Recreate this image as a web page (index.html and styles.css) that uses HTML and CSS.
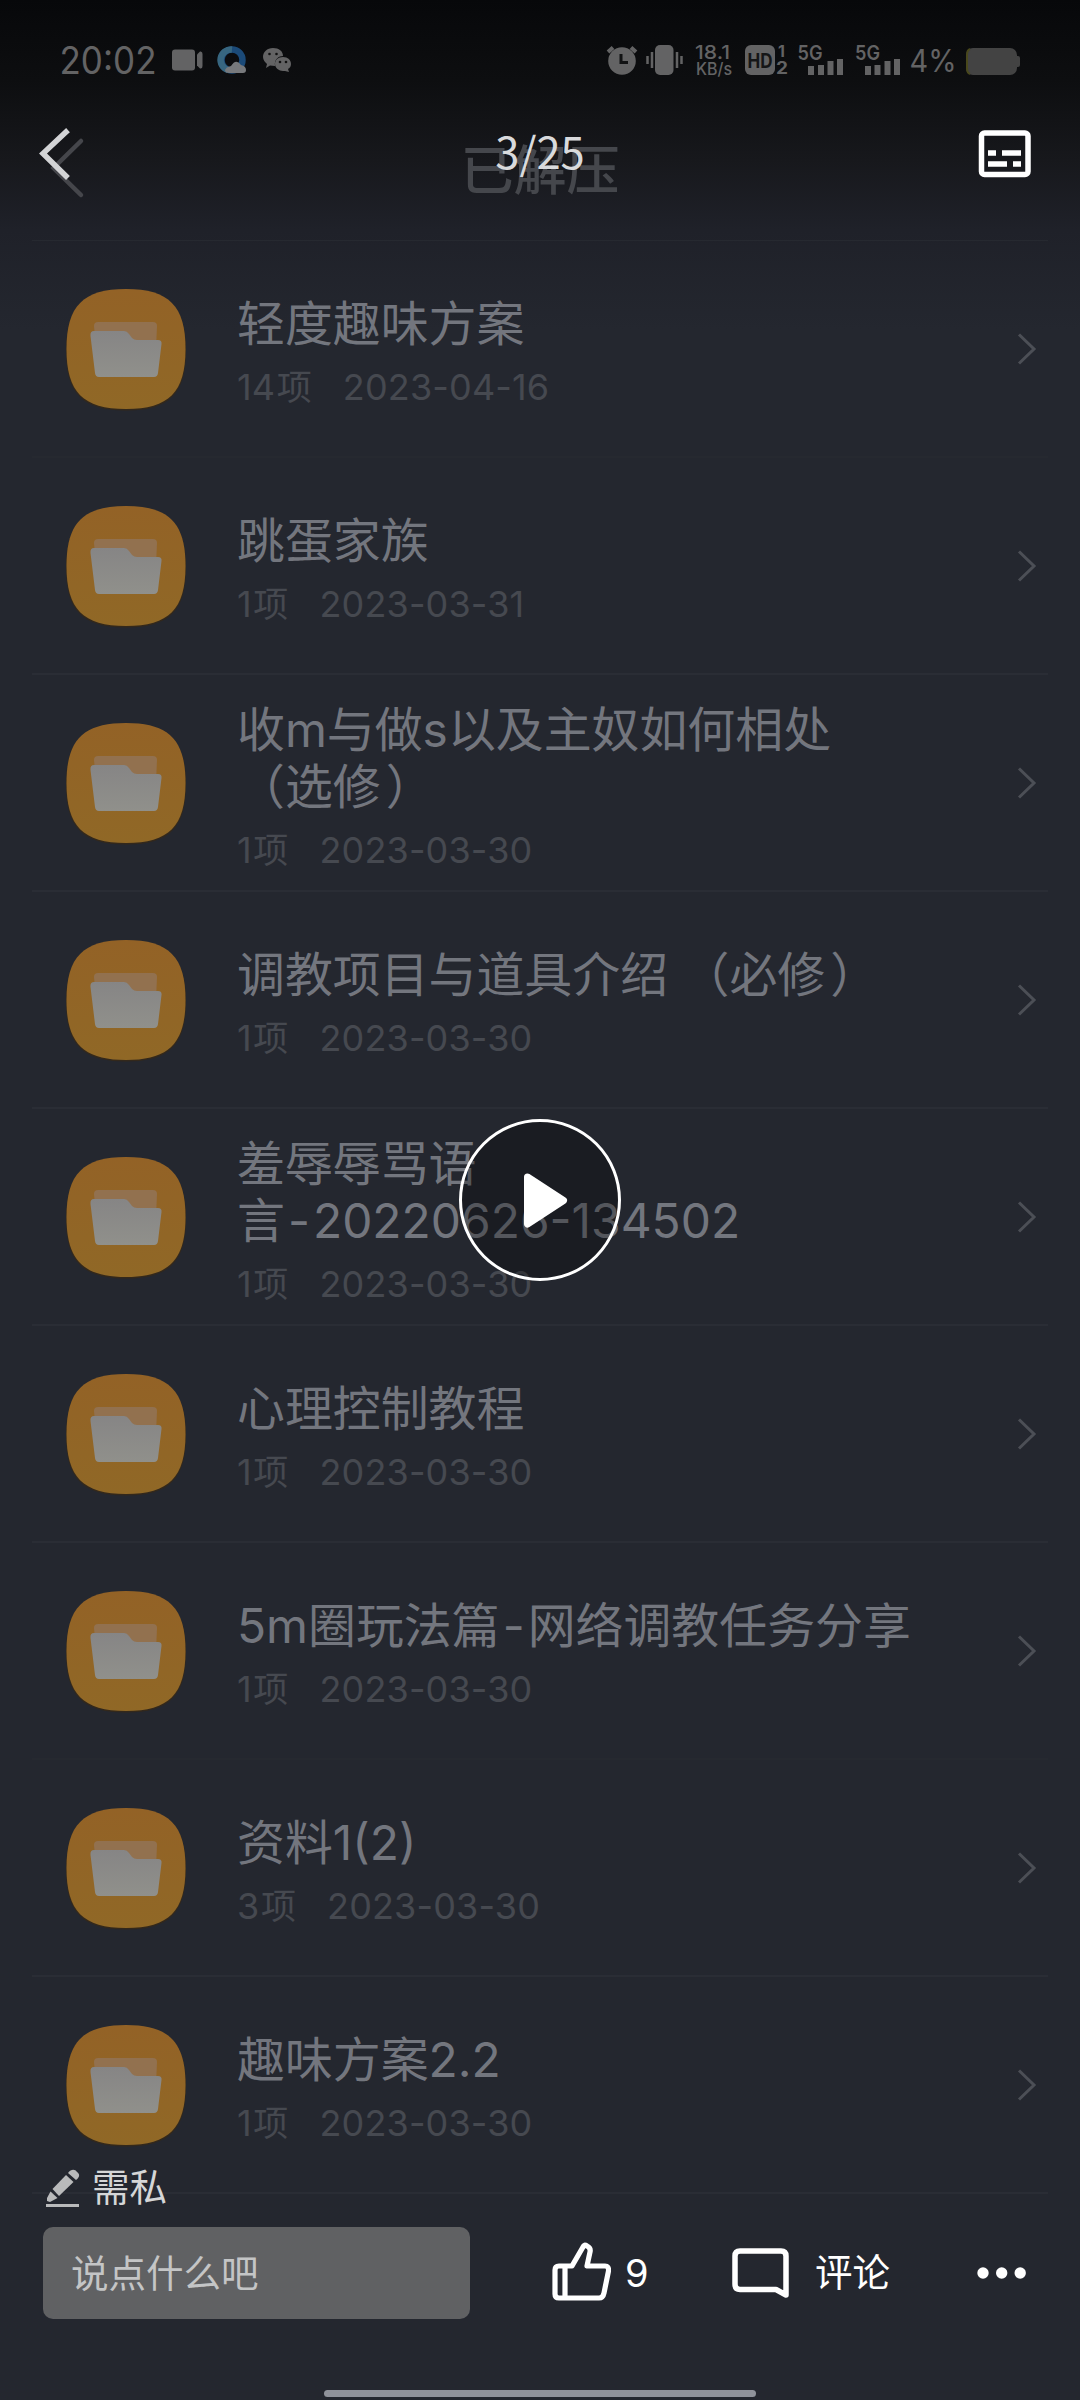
FILE: index.html
```html
<!DOCTYPE html>
<html lang="zh-CN">
<head>
<meta charset="utf-8">
<title>3/25</title>
<link rel="stylesheet" href="styles.css">
</head>
<body>
<svg class="defs" width="0" height="0">
  <defs>
    <linearGradient id="tile" x1="0" y1="0" x2="0" y2="1">
      <stop offset="0" stop-color="#936226"/><stop offset="1" stop-color="#906826"/>
    </linearGradient>
    <linearGradient id="front" x1="0" y1="0" x2="0" y2="1">
      <stop offset="0" stop-color="#868585"/><stop offset="1" stop-color="#90908b"/>
    </linearGradient>
    <symbol id="folder" viewBox="0 0 120 122">
      <path d="M60 1.5C103 1.5 120 18 120 61.500C120 105 103 121.500 60 121.500C17 121.500 0 105 0 61.500C0 18 17 1.500 60 1.500Z" fill="#3a2a13" opacity=".7"/>
      <path d="M60 0C103 0 119.500 17 119.500 60C119.500 103 103 120 60 120C17 120 .5 103 .5 60C.5 17 17 0 60 0Z" fill="url(#tile)"/>
      <path d="M32 33H87Q91 33 91 37L90 60H30L28 37Q28 33 32 33Z" fill="#92714f"/>
      <path d="M28 42H58Q61 42 63 45L66 49Q68 51 71 51H92Q96 51 95.500 55L92 84Q91.500 88 88 88H33Q29.500 88 29 84L24.500 47Q24 42 28 42Z" fill="url(#front)"/>
    </symbol>
    <symbol id="next" viewBox="0 0 20 32">
      <path d="M2 1.500L17 16L2 30.500" fill="none" stroke="#4c4f56" stroke-width="3"/>
    </symbol>
  </defs>
</svg>
<div class="screen">
  <header class="top">
    <div class="status">
      <svg width="1080" height="90" viewBox="0 0 1080 90">
        <g fill="#636364" class="latin">
          <text x="59.500" y="74" font-size="37.500" textLength="97" lengthAdjust="spacingAndGlyphs">20:02</text>
          <rect x="172" y="49.500" width="23" height="21" rx="3"/>
          <path d="M197 54.500L200 51.500Q202.500 51 202.500 54V66Q202.500 69 200 68.500L197 65.500Z"/>
          <circle cx="232" cy="60" r="10.500" fill="none" stroke="#1b4a78" stroke-width="6.500"/>
          <path d="M232 49.500A10.500 10.500 0 0 0 228 70" fill="none" stroke="#376680" stroke-width="6.500"/>
          <path d="M229 73Q225 73 225 70Q226 67 231 66Q236 58 241 65Q246 66 246 70Q246 73 243 73Z" fill="#77797c"/>
          <path d="M273 48C267 48 263 52 263 57C263 60 265 62 267 64L266 68L270 65.500L275 66C274 59 279 56 283 56C283 51 279 48 273 48Z"/>
          <path d="M283 57C278 57 275 60 275 64C275 68 279 71 283 71H285L289 72L288 69C290 68 291 66 291 64C291 60 288 57 283 57Z"/>
          <g fill="#111"><circle cx="269.500" cy="54" r="1.300"/><circle cx="276.500" cy="54" r="1.300"/><circle cx="280" cy="62" r="1.300"/><circle cx="286" cy="62" r="1.300"/></g>
          <circle cx="622" cy="61" r="13.800"/>
          <path d="M608 52L613 47.500M636 52L631 47.500" stroke="#636364" stroke-width="4"/>
          <path d="M621 54V62.500H628" fill="none" stroke="#111213" stroke-width="3"/>
          <rect x="655" y="45" width="18.500" height="30" rx="5"/>
          <path d="M652 52V68M677 52V68M647.500 56V64M681.500 56V64" stroke="#636364" stroke-width="2.500"/>
          <text x="695" y="58.500" font-size="18.500" font-weight="500" textLength="35" lengthAdjust="spacingAndGlyphs">18.1</text>
          <text x="696" y="75" font-size="17" font-weight="500" textLength="36" lengthAdjust="spacingAndGlyphs">KB/s</text>
          <rect x="745" y="45" width="30" height="30" rx="6"/>
          <text x="747.500" y="67.500" font-size="20" font-weight="700" fill="#151617" textLength="25" lengthAdjust="spacingAndGlyphs">HD</text>
          <text x="778" y="57" font-size="16" font-weight="700">1</text>
          <text x="776" y="74" font-size="17" font-weight="700" textLength="12" lengthAdjust="spacingAndGlyphs">2</text>
          <text x="797.500" y="59.500" font-size="20" font-weight="600" textLength="25" lengthAdjust="spacingAndGlyphs">5G</text>
          <path d="M811 66V75M821 65V75M830.500 61V75M840 59V75" stroke="#636364" stroke-width="6"/>
          <text x="855" y="59.500" font-size="20" font-weight="600" textLength="25" lengthAdjust="spacingAndGlyphs">5G</text>
          <path d="M868 66V75M877.500 65V75M887.500 61V75M897 59V75" stroke="#636364" stroke-width="6"/>
          <text x="909.500" y="72" font-size="31" textLength="47" lengthAdjust="spacingAndGlyphs">4%</text>
          <rect x="966" y="48" width="51" height="27" rx="7" fill="#434343"/>
          <rect x="1015" y="56" width="5" height="11" rx="2" fill="#434343"/>
          <path d="M970 49Q967 50 967 55V68Q967 73 970 74" fill="none" stroke="#49481c" stroke-width="2"/>
        </g>
      </svg>
    </div>
    <div class="nav">
      <div class="nav-side">
        <svg width="60" height="80" viewBox="0 0 60 80">
          <path d="M45 15L17.500 42L45 69" fill="none" stroke="#45464b" stroke-width="4.500" stroke-linecap="round"/>
          <path d="M30 6L7 27.500L30 50" fill="none" stroke="#d3d4d6" stroke-width="5.500" stroke-linecap="square"/>
        </svg>
      </div>
      <div class="nav-title">已解压<span class="counter">3/25</span></div>
      <div class="nav-side end">
        <svg width="54" height="48" viewBox="0 0 54 48">
          <rect x="3.500" y="3" width="46.500" height="41.500" rx="3" fill="none" stroke="#fff" stroke-width="5.500"/>
          <path d="M10 23H18M24 23H43M10 34H29M35 34H43" stroke="#fff" stroke-width="5.500"/>
        </svg>
      </div>
    </div>
  </header>

  <main class="list">
    <div class="row"><svg class="tile"><use href="#folder"/></svg><div class="info"><div class="name">轻度趣味方案</div><div class="meta"><span>14<i>项</i></span><span>2023-04-16</span></div></div><svg class="arrow"><use href="#next"/></svg></div>
    <div class="row"><svg class="tile"><use href="#folder"/></svg><div class="info"><div class="name">跳蛋家族</div><div class="meta"><span>1<i>项</i></span><span>2023-03-31</span></div></div><svg class="arrow"><use href="#next"/></svg></div>
    <div class="row"><svg class="tile"><use href="#folder"/></svg><div class="info"><div class="name">收m与做s以及主奴如何相处<br>（选修<span class="close">）</span></div><div class="meta"><span>1<i>项</i></span><span>2023-03-30</span></div></div><svg class="arrow"><use href="#next"/></svg></div>
    <div class="row"><svg class="tile"><use href="#folder"/></svg><div class="info"><div class="name">调教项目与道具介绍 （必修<span class="close">）</span></div><div class="meta"><span>1<i>项</i></span><span>2023-03-30</span></div></div><svg class="arrow"><use href="#next"/></svg></div>
    <div class="row"><svg class="tile"><use href="#folder"/></svg><div class="info"><div class="name">羞辱辱骂语<br>言<span class="dash">-</span><span class="digits">20220626-134502</span></div><div class="meta"><span>1<i>项</i></span><span>2023-03-30</span></div></div><svg class="arrow"><use href="#next"/></svg></div>
    <div class="row"><svg class="tile"><use href="#folder"/></svg><div class="info"><div class="name">心理控制教程</div><div class="meta"><span>1<i>项</i></span><span>2023-03-30</span></div></div><svg class="arrow"><use href="#next"/></svg></div>
    <div class="row"><svg class="tile"><use href="#folder"/></svg><div class="info"><div class="name">5m圈玩法篇<span class="dash">-</span>网络调教任务分享</div><div class="meta"><span>1<i>项</i></span><span>2023-03-30</span></div></div><svg class="arrow"><use href="#next"/></svg></div>
    <div class="row"><svg class="tile"><use href="#folder"/></svg><div class="info"><div class="name">资料1(2)</div><div class="meta"><span>3<i>项</i></span><span>2023-03-30</span></div></div><svg class="arrow"><use href="#next"/></svg></div>
    <div class="row"><svg class="tile"><use href="#folder"/></svg><div class="info"><div class="name">趣味方案2.2</div><div class="meta"><span>1<i>项</i></span><span>2023-03-30</span></div></div><svg class="arrow"><use href="#next"/></svg></div>
  </main>

  <div class="play">
    <svg width="162" height="162" viewBox="0 0 162 162">
      <circle cx="81" cy="81" r="79.500" fill="#000" fill-opacity=".27" stroke="#fff" stroke-width="3"/>
      <path d="M68.500 58L104.500 81.500L68.500 105Z" fill="#fff" stroke="#fff" stroke-width="7" stroke-linejoin="round"/>
    </svg>
  </div>

  <footer class="bottom">
    <div class="caption">
      <svg width="34" height="40" viewBox="0 0 34 40">
        <g fill="#b9babb">
          <path d="M0 36H33V39H0Z"/>
          <path d="M1 33V30L4.500 23.500L11.500 30L4 34Z"/>
          <path d="M6.500 21L20 7L27.500 14L13 28Z"/>
          <path d="M22 5C25 1 29 1 31 4C34 6 34 9 30 12Z"/>
        </g>
      </svg>
      <span>需私</span>
    </div>
    <div class="actions">
      <div class="input">说点什么吧</div>
      <div class="like">
        <svg width="59" height="60" viewBox="0 0 59 60">
          <path d="M13 24H20L31 5Q32 2 35 4Q39 6 38 10L35 24H53Q57 24 56.500 29L52 51Q51 56 47 56H7Q3 56 3 52V28Q3 24 7 24H13V56" fill="none" stroke="#fff" stroke-width="5.200" stroke-linejoin="round"/>
        </svg>
        <span class="count">9</span>
      </div>
      <div class="comment">
        <svg width="57" height="51" viewBox="0 0 57 51">
          <path d="M8 3H49Q54 3 54 8V47L44 41.500H8Q3 41.500 3 36V8Q3 3 8 3Z" fill="none" stroke="#fff" stroke-width="5.500" stroke-linejoin="round"/>
        </svg>
        <span>评论</span>
      </div>
      <svg class="more" width="50" height="12" viewBox="0 0 50 12"><g fill="#fff"><circle cx="6" cy="6" r="5.700"/><circle cx="24.700" cy="6" r="5.700"/><circle cx="43.200" cy="6" r="5.700"/></g></svg>
    </div>
    <div class="home"></div>
  </footer>
</div>
</body>
</html>
```
FILE: styles.css
```css
* { box-sizing: border-box; }
body { margin: 0; background: #24272f; font-family: Inter, "Noto Sans CJK SC", sans-serif; }
i { font-style: normal; }
svg { display: block; flex: none; }
.defs { position: absolute; }
.screen { position: relative; width: 1080px; height: 2400px; overflow: hidden; background: linear-gradient(#07080a 0, #0d0e10 80px, #17181c 160px, #1f2129 230px, #24272f 330px); }
.top { height: 240px; }
.status { height: 90px; }
.latin { font-family: Inter, sans-serif; }
.nav { display: flex; align-items: flex-start; justify-content: space-between; height: 150px; padding: 36px 48px 0 36px; }
.nav-side { width: 120px; }
.nav-side svg { overflow: visible; }
.nav-side.end { display: flex; justify-content: flex-end; padding-top: 4px; }
.nav-title { position: relative; width: 160px; margin-left: 12px; padding-top: 7px; font-size: 53px; font-weight: 500; line-height: 76px; text-align: center; color: #45474c; white-space: nowrap; }
.counter { position: absolute; left: 0; right: 0; top: -5px; font-family: "Noto Sans CJK SC", sans-serif; font-size: 43.500px; font-weight: 400; line-height: 60px; color: #d9dadc; }
.list { display: flex; flex-direction: column; margin: 0 32px; border-top: 1px solid #262930; }
.row { display: flex; align-items: center; height: 217px; padding: 0 11px 0 34px; border-bottom: 2px solid #2a2d35; }
.row:nth-child(1), .row:nth-child(7) { border-bottom-color: #262930; }
.tile { width: 120px; height: 122px; margin-top: 2px; }
.info { flex: 1; margin-left: 51px; padding-top: 2px; }
.name { font-size: 47.900px; line-height: 57px; color: #73767e; white-space: nowrap; }
.digits { letter-spacing: 0; }
.dash { padding: 0 3px; }
.close { margin-left: 5px; }
.meta { display: flex; gap: 31px; margin-top: 19px; font-size: 36px; line-height: 31px; letter-spacing: .15px; color: #464950; white-space: nowrap; }
.meta i { margin-left: 1.500px; font-size: 35px; }
.arrow { width: 20px; height: 32px; }
.play { position: absolute; left: 459px; top: 1119px; }
.bottom { position: absolute; left: 0; right: 0; bottom: 0; height: 232px; }
.caption { display: flex; align-items: center; gap: 12px; height: 40px; padding-left: 46px; font-size: 37.500px; line-height: 40px; color: #d5d6d7; }
.actions { display: flex; align-items: center; height: 92px; margin-top: 19px; padding-left: 43px; color: #fff; font-size: 37.500px; }
.input { width: 427px; height: 92px; padding-left: 28px; border-radius: 10px; background: #606163; color: #c4c5c6; line-height: 93px; }
.like { display: flex; align-items: center; gap: 14px; width: 180px; margin-left: 82px; }
.like svg { margin-top: -2px; }
.count { font-size: 38px; line-height: 60px; }
.comment { display: flex; align-items: center; gap: 26px; width: 245px; line-height: 48px; }
.comment span { margin-top: -1px; }
.home { width: 432px; height: 7px; margin: 71px auto 0; border-radius: 4px; background: #8f929a; }
```
